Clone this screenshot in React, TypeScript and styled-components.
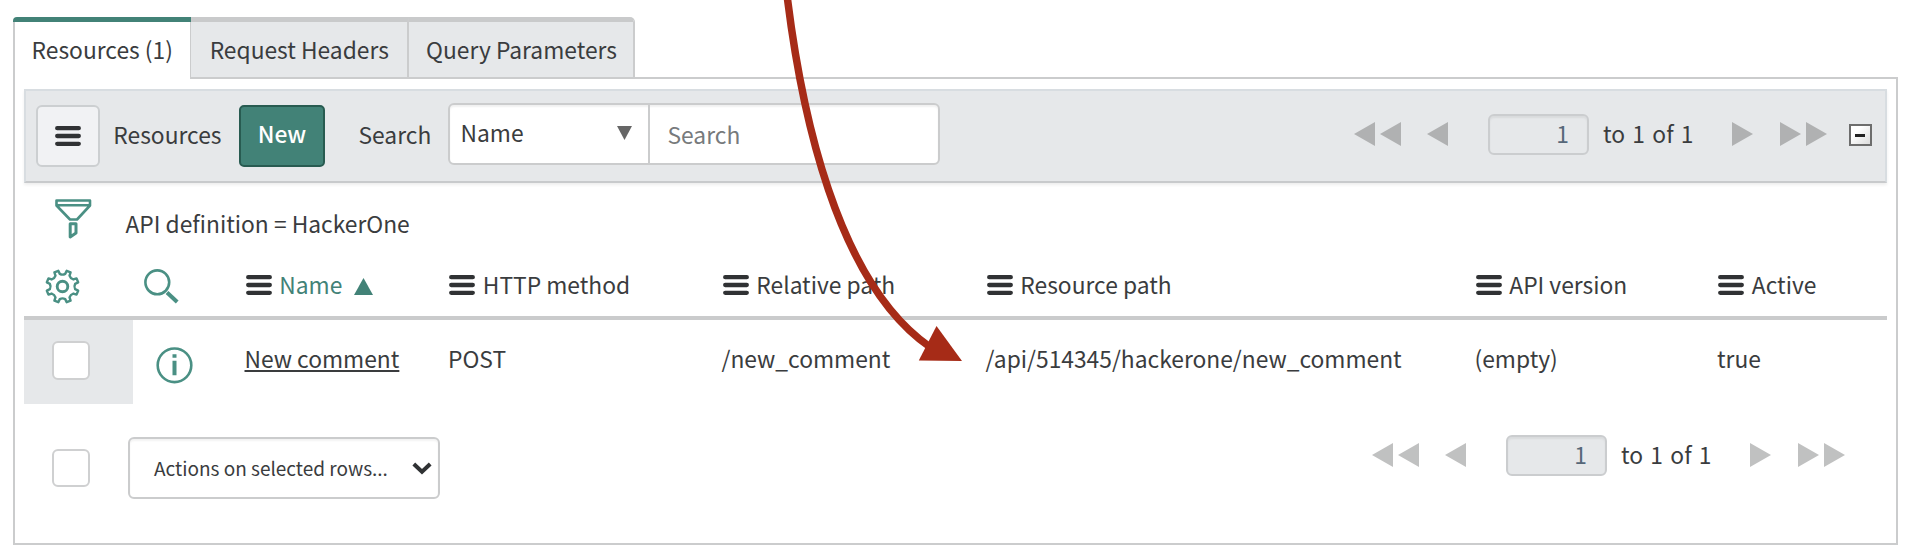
import React from 'react';
import styled, { createGlobalStyle, css } from 'styled-components';

const color = {
  text: '#3a3c3e',
  teal: '#428277',
  icon: '#4a9084',
  line: '#cbcccd',
  panel: '#e6e8ea',
};

const GlobalStyle = createGlobalStyle`
  *, *::before, *::after { box-sizing: border-box; }
  body {
    margin: 0;
    background: #fff;
    color: ${color.text};
    font: 22.8px/28px "Noto Sans CJK SC", "Noto Sans", sans-serif;
    overflow: hidden;
  }
  svg { display: block; flex: none; }
`;

const Page = styled.main`
  position: relative;
  width: 1910px;
  height: 558px;
  padding: 17px 12px 0 12.5px;
`;

const Tabs = styled.nav`
  display: flex;
  height: 62px;
  margin-bottom: -2px;
  position: relative;
`;

const Tab = styled.div<{ $width: number; $active?: boolean }>`
  width: ${(p) => p.$width}px;
  height: 62px;
  padding-left: 1.5px;
  display: flex;
  align-items: center;
  justify-content: center;
  white-space: nowrap;
  background: ${color.panel};
  border-top: 5.5px solid #c9cacb;
  border-right: 2px solid ${color.line};
  border-bottom: 2px solid ${color.line};
  &:last-child { border-top-right-radius: 5px; }
  ${(p) =>
    p.$active &&
    css`
      background: #fff;
      border-top-color: ${color.teal};
      border-bottom: 0;
      border-right: 0;
      padding-bottom: 1px;
      border-top-left-radius: 4px;
      box-shadow: inset 2px 0 ${color.line}, inset -1px 0 ${color.line};
    `}
`;

const Panel = styled.section`
  width: 1885px;
  height: 468px;
  border: 2px solid ${color.line};
  padding: 10px 9px;
`;

const Toolbar = styled.header`
  height: 94px;
  display: flex;
  align-items: center;
  padding: 0 13px 0 10px;
  background: ${color.panel};
  border: 2px solid #d8dde1;
  border-bottom-color: #c8cacc;
  box-shadow: 0 2px 3px rgba(0, 0, 0, 0.07);
`;

const MenuButton = styled.button`
  width: 64px;
  height: 62px;
  padding: 0 0 0 17px;
  border: 2px solid #cccfd1;
  border-radius: 6px;
  background: #f1f2f4;
`;

const ToolbarLabel = styled.span<{ $width: number; $indent: number }>`
  width: ${(p) => p.$width}px;
  padding: 0 0 3px ${(p) => p.$indent}px;
`;

const NewButton = styled.button`
  width: 86px;
  height: 62px;
  margin-bottom: 1px;
  padding: 0 0 3px;
  border: 2px solid #285b51;
  border-radius: 5px;
  background: ${color.teal};
  color: #fff;
  font: inherit;
  font-weight: 500;
`;

const SearchGroup = styled.div`
  display: flex;
  height: 62px;
  width: 492px;
  margin-bottom: 4px;
  border: 2px solid ${color.line};
  border-radius: 6px;
  background: #fff;
  box-shadow: inset 0 2px 2px rgba(0, 0, 0, 0.06);
`;

const FieldSelect = styled.div`
  width: 200px;
  padding: 0 16px 3px 10.5px;
  display: flex;
  align-items: center;
  justify-content: space-between;
  border-right: 2px solid ${color.line};
`;

const SearchField = styled.div`
  display: flex;
  align-items: center;
  padding: 1px 0 0 17.5px;
  color: #777a7c;
`;

const Pager = styled.div<{ $tone: string }>`
  display: flex;
  align-items: center;
  height: 42px;
  margin: 0 0 4px auto;
  color: ${(p) => p.$tone};
`;

const PageInput = styled.div`
  width: 101px;
  height: 41.5px;
  margin: 1px 14px 0 40px;
  padding: 0 18px 1px 0;
  display: flex;
  align-items: center;
  justify-content: flex-end;
  border: 2px solid #cbcdcf;
  border-radius: 6px;
  background: ${color.panel};
  box-shadow: inset 0 2px 2px rgba(0, 0, 0, 0.06);
  color: #566779;
`;

const PageRange = styled.span`
  width: 129px;
  word-spacing: 2.2px;
  color: ${color.text};
`;

const Gap = styled.span<{ $size: number }>`
  flex: none;
  width: ${(p) => p.$size}px;
`;

const Collapse = styled.button`
  width: 22.5px;
  height: 22px;
  margin: 0 0 2px 22.5px;
  padding: 0;
  display: grid;
  place-items: center;
  border: 2px solid #6d6d6d;
  background: linear-gradient(135deg, #fff 30%, #dcdcdc);
  &::after {
    content: '';
    width: 10px;
    height: 3px;
    background: #222;
  }
`;

const FilterRow = styled.div`
  height: 72px;
  display: flex;
  align-items: center;
  padding-left: 31.5px;
`;

const Breadcrumb = styled.span`
  padding: 10px 0 0 33.5px;
`;

const gridColumns = css`
  display: grid;
  grid-template-columns: 109px 112px 203.5px 273.5px 264px 489px 242.5px 1fr;
  align-items: center;
`;

const HeaderRow = styled.div`
  ${gridColumns}
  height: 64.5px;
  border-bottom: 4px solid #cacbcc;
`;

const HeaderCell = styled.div<{ $sorted?: boolean }>`
  display: flex;
  align-items: center;
  padding: 0 0 0 1.3px;
  white-space: nowrap;
  color: ${(p) => (p.$sorted ? color.teal : color.text)};
`;

const HeaderText = styled.span`
  padding: 0 0 0 7.5px;
`;

const SortMark = styled.span`
  padding: 3px 0 0 11.5px;
  color: ${color.teal};
`;

const ActionCell = styled.div<{ $indent: number; $drop?: number }>`
  padding: ${(p) => p.$drop ?? 0}px 0 0 ${(p) => p.$indent}px;
`;

const DataRow = styled.div`
  ${gridColumns}
  height: 84px;
`;

const CheckCell = styled.div`
  height: 84px;
  padding: 21.5px 0 0 28px;
  background: ${color.panel};
`;

const Checkbox = styled.span`
  display: block;
  width: 38.5px;
  height: 38.5px;
  border: 2px solid #cfd0d1;
  border-radius: 6px;
  background: #fff;
`;

const DataCell = styled.div<{ $link?: boolean }>`
  padding-bottom: 5px;
  white-space: nowrap;
  ${(p) =>
    p.$link &&
    css`
      text-decoration: underline;
      text-decoration-thickness: 2px;
      text-underline-offset: 2px;
      text-decoration-skip-ink: none;
    `}
`;

const Footer = styled.footer`
  height: 129px;
  display: flex;
  align-items: center;
  padding: 0 42px 0 28px;
`;

const ActionsSelect = styled.div`
  width: 312.5px;
  height: 62px;
  margin-left: 37.5px;
  padding: 0 6px 0 24.5px;
  display: flex;
  align-items: center;
  justify-content: space-between;
  border: 2px solid ${color.line};
  border-radius: 6px;
  box-shadow: inset 0 2px 2px rgba(0, 0, 0, 0.05);
  font-size: 19px;
`;

const FooterPager = styled(Pager)`
  margin-bottom: 26px;
`;

const Pointer = styled.svg`
  position: absolute;
  left: 0;
  top: 0;
  pointer-events: none;
`;

const Bars = () => (
  <svg width="26" height="20" viewBox="0 0 26 20" stroke="#303234" strokeWidth="4.3" strokeLinecap="round">
    <path d="M2.2 2.2H23.8M2.2 10H23.8M2.2 17.8H23.8" />
  </svg>
);

const Arrow = ({ left, double }: { left?: boolean; double?: boolean }) => {
  const width = double ? 47 : 21;
  return (
    <svg width={width} height="24" viewBox={`0 0 ${width} 24`} fill="currentColor">
      <path d={left ? 'M21 0V24L0 12Z' : 'M0 0V24L21 12Z'} />
      {double && <path d={left ? 'M47 0V24L26 12Z' : 'M26 0V24L47 12Z'} />}
    </svg>
  );
};

const PagerItems = () => (
  <>
    <Arrow left double />
    <Gap $size={26.5} />
    <Arrow left />
    <PageInput>1</PageInput>
    <PageRange>to 1 of 1</PageRange>
    <Arrow />
    <Gap $size={26.5} />
    <Arrow double />
  </>
);

const FilterIcon = () => (
  <svg width="37" height="40" viewBox="0 0 37 40" fill="none" stroke={color.icon} strokeWidth="2.6" strokeLinejoin="round">
    <path d="M1.5 1.5H35V6.5L22 20.5H15L1.5 6.5ZM1.5 6.3H35" />
    <path d="M15.2 24.8H21V34L15.2 38Z" strokeWidth="3" />
  </svg>
);

/* Eight teeth joined by rounded valleys. */
const gearPath = (() => {
  const at = (deg: number, radius: number) => {
    const angle = (deg * Math.PI) / 180;
    return `${(17.5 + radius * Math.cos(angle)).toFixed(2)} ${(17.5 + radius * Math.sin(angle)).toFixed(2)}`;
  };
  let d = `M${at(22.5 - 7.5, 16.2)}`;
  for (let i = 0; i < 8; i += 1) {
    const a = i * 45 + 22.5;
    d += `L${at(a + 7.5, 16.2)}L${at(a + 10.5, 12.9)}Q${at(a + 22.5, 11.2)} ${at(a + 34.5, 12.9)}L${at(a + 37.5, 16.2)}`;
  }
  return `${d}Z`;
})();

const GearIcon = () => (
  <svg width="35" height="35" viewBox="0 0 35 35" fill="none" stroke={color.icon} strokeWidth="2.4" strokeLinejoin="round">
    <path d={gearPath} />
    <circle cx="17.5" cy="17.5" r="5.3" strokeWidth="2.9" />
  </svg>
);

const SearchIcon = () => (
  <svg width="35" height="35" viewBox="0 0 35 35" fill="none" stroke={color.icon}>
    <circle cx="13.3" cy="13.3" r="11.9" strokeWidth="2.6" />
    <path d="M23 23.5L33.2 33" strokeWidth="4" />
  </svg>
);

const InfoIcon = () => (
  <svg width="37" height="37" viewBox="0 0 37 37" fill="none" stroke={color.icon}>
    <circle cx="18.5" cy="18.3" r="16.8" strokeWidth="2.6" />
    <path d="M18.5 7.3V10.8M18.5 13.7V28.3" strokeWidth="4" />
  </svg>
);

const headers = ['Name', 'HTTP method', 'Relative path', 'Resource path', 'API version', 'Active'];
const row = ['New comment', 'POST', '/new_comment', '/api/514345/hackerone/new_comment', '(empty)', 'true'];

export default function App() {
  return (
    <Page>
      <GlobalStyle />
      <Tabs>
        <Tab $width={178} $active>Resources (1)</Tab>
        <Tab $width={218}>Request Headers</Tab>
        <Tab $width={226.5}>Query Parameters</Tab>
      </Tabs>
      <Panel>
        <Toolbar>
          <MenuButton aria-label="Menu"><Bars /></MenuButton>
          <ToolbarLabel $width={139.5} $indent={13.8}>Resources</ToolbarLabel>
          <NewButton>New</NewButton>
          <ToolbarLabel $width={123} $indent={33.5}>Search</ToolbarLabel>
          <SearchGroup>
            <FieldSelect>
              Name
              <svg width="15" height="14" viewBox="0 0 15 14" fill="#666"><path d="M0 0H15L7.5 14Z" /></svg>
            </FieldSelect>
            <SearchField>Search</SearchField>
          </SearchGroup>
          <Pager $tone="#b0b1b2"><PagerItems /></Pager>
          <Collapse aria-label="Collapse" />
        </Toolbar>
        <FilterRow>
          <FilterIcon />
          <Breadcrumb>API definition = HackerOne</Breadcrumb>
        </FilterRow>
        <HeaderRow>
          <ActionCell $indent={21} $drop={3}><GearIcon /></ActionCell>
          <ActionCell $indent={11.5} $drop={3}><SearchIcon /></ActionCell>
          {headers.map((label, i) => (
            <HeaderCell key={label} $sorted={i === 0}>
              <Bars />
              <HeaderText>{label}</HeaderText>
              {i === 0 && (
                <SortMark>
                  <svg width="19" height="17" viewBox="0 0 19 17" fill="currentColor"><path d="M9.5 0L19 17H0Z" /></svg>
                </SortMark>
              )}
            </HeaderCell>
          ))}
        </HeaderRow>
        <DataRow>
          <CheckCell><Checkbox /></CheckCell>
          <ActionCell $indent={23.5} $drop={8}><InfoIcon /></ActionCell>
          {row.map((value, i) => (
            <DataCell key={value} $link={i === 0}>{value}</DataCell>
          ))}
        </DataRow>
        <Footer>
          <Checkbox />
          <ActionsSelect>
            Actions on selected rows...
            <svg width="20" height="13" viewBox="0 0 20 13" fill="none" stroke="#303234" strokeWidth="4">
              <path d="M1.8 2L10 9.7L18.2 2" />
            </svg>
          </ActionsSelect>
          <FooterPager $tone="#c0c1c1"><PagerItems /></FooterPager>
        </Footer>
      </Panel>
      <Pointer width="1910" height="558" viewBox="0 0 1910 558">
        <path d="M787 -5C801 110 836 282 930 347" fill="none" stroke="#a62b17" strokeWidth="7.5" />
        <path d="M936.5 326L962 361L918.8 360.5Z" fill="#a62b17" />
      </Pointer>
    </Page>
  );
}
